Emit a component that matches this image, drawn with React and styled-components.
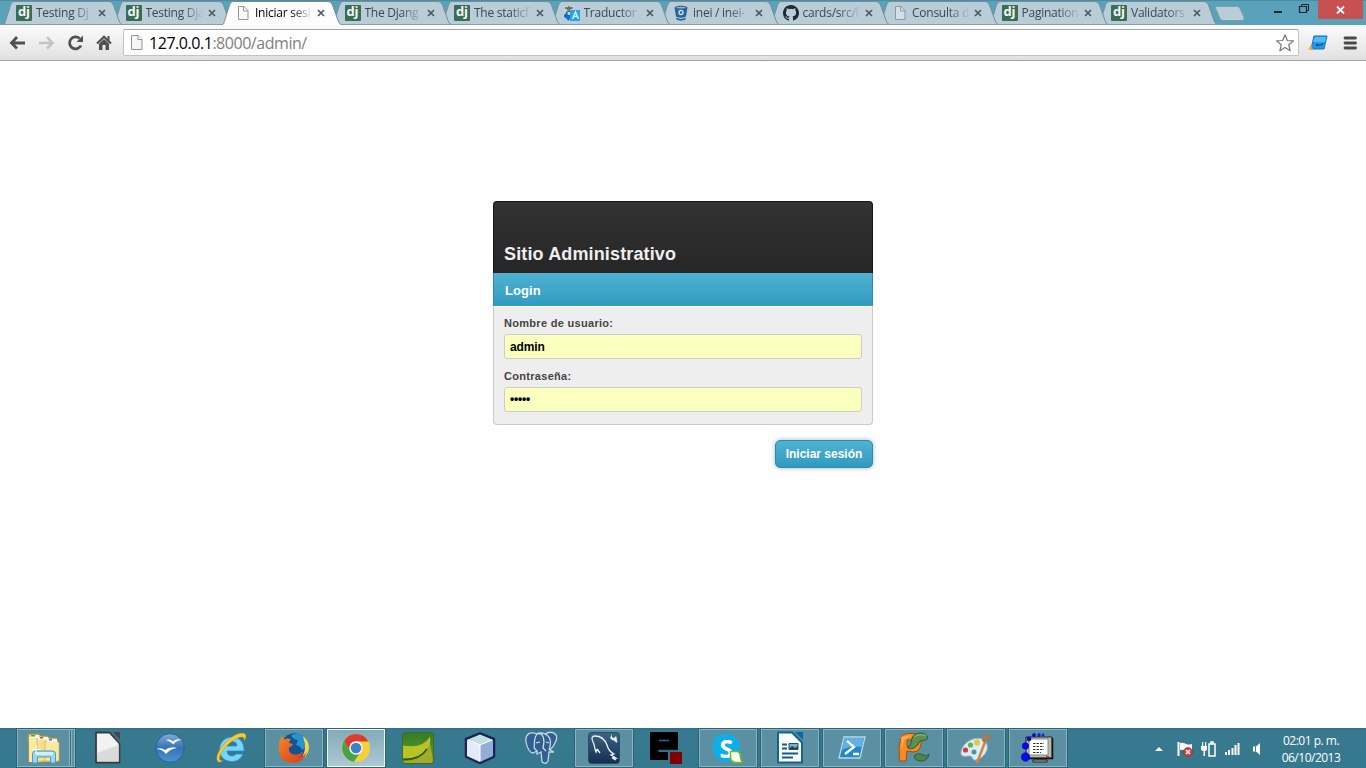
import React from 'react';
import styled, { createGlobalStyle } from 'styled-components';

const GlobalStyle = createGlobalStyle`
  * { box-sizing: border-box; }
  html, body { margin: 0; padding: 0; }
  body { background: #fff; overflow: hidden; font-family: "Liberation Sans", Arial, sans-serif; }
  svg { display: block; flex: none; }
`;

const Screen = styled.div`
  width: 1366px;
  height: 768px;
  display: flex;
  flex-direction: column;
  overflow: hidden;
  background: #fff;
`;

/* ---------- Browser tab strip ---------- */

const TabStrip = styled.div`
  height: 25px;
  flex: none;
  display: flex;
  align-items: flex-start;
  padding-left: 3px;
  background: #59a2ba;
  box-shadow: inset 0 1px #4b8da4;
`;

const Tabs = styled.div`
  display: flex;
  position: relative;
  padding-top: 1px;
`;

const TabBox = styled.div`
  position: relative;
  z-index: ${(p) => p.$z};
  flex: none;
  width: 119.5px;
  height: 24px;
  margin-right: -10px;
  display: flex;
  align-items: center;
  padding-left: 13px;
`;

const TabShape = styled.svg`
  position: absolute;
  left: -3px;
  top: 0;
`;

const Favicon = styled.span`
  position: relative;
  width: 16px;
  height: 16px;
  flex: none;
`;

const TabTitle = styled.span`
  position: relative;
  flex: none;
  margin-left: 4px;
  width: 58px;
  white-space: nowrap;
  font: 12px/16px "Open Sans", "Noto Sans", sans-serif;
  letter-spacing: -0.25px;
  color: ${(p) => (p.$active ? '#000' : '#3d474c')};
  mask-image: linear-gradient(90deg, #000 36px, transparent 58px);
`;

const TabClose = styled.svg`
  position: relative;
  margin-left: 4px;
`;

const NewTab = styled.svg`
  margin: 5px 0 0 6px;
`;

const WindowControls = styled.div`
  margin-left: auto;
  display: flex;
  height: 19px;
`;

const CloseWindow = styled.div`
  width: 45px;
  height: 19px;
  margin: 0 3px 0 7px;
  background: #c75050;
  display: flex;
  align-items: center;
  justify-content: center;
`;

/* ---------- Browser toolbar ---------- */

const Toolbar = styled.div`
  height: 36px;
  flex: none;
  display: flex;
  align-items: center;
  background: linear-gradient(#fbfbfb, #e1e1e1);
  border-bottom: 1px solid #a3a3a3;
`;

const NavIcons = styled.div`
  display: flex;
  width: 123px;
  padding-left: 8px;
  gap: 10px;
`;

const Omnibox = styled.div`
  width: 1176px;
  height: 27px;
  display: flex;
  align-items: center;
  padding: 0 4px 0 7px;
  background: #fff;
  border: 1px solid #c3c3c3;
  border-top-color: #a5a5a5;
  border-radius: 2px;
`;

const Url = styled.div`
  flex: 1;
  margin-left: 6px;
  font: 16px/24px "Open Sans", "Noto Sans", sans-serif;
  letter-spacing: -0.46px;
  color: #000;
`;

const UrlRest = styled.span`
  color: #808080;
`;

const ToolbarEnd = styled.div`
  display: flex;
  align-items: center;
  gap: 15px;
  padding-left: 9px;
`;

/* ---------- Page ---------- */

const Page = styled.main`
  flex: 1;
  display: flex;
  flex-direction: column;
  align-items: center;
  padding-top: 140px;
`;

const LoginForm = styled.div`
  width: 380px;
  display: flex;
  flex-direction: column;
`;

const SiteHeader = styled.h1`
  margin: 0;
  height: 72px;
  padding: 42px 10px 0;
  border: 1px solid #161616;
  border-bottom: 0;
  border-radius: 4px 4px 0 0;
  background: linear-gradient(#333, #262626);
  color: #eee;
  font-size: 18px;
  line-height: 20px;
  font-weight: bold;
  letter-spacing: 0.14px;
`;

const Band = styled.h2`
  margin: 0;
  height: 33px;
  padding: 0 11px;
  border: solid #2b8ab0;
  border-width: 0 1px;
  background: linear-gradient(#4fb2d3, #309bbf);
  color: #fff;
  font-size: 13px;
  line-height: 35px;
  font-weight: bold;
  letter-spacing: 0.05px;
`;

const Fields = styled.div`
  height: 119px;
  padding: 9px 10px 0;
  border: 1px solid #ccc;
  border-top-color: #fff;
  border-radius: 0 0 4px 4px;
  background: #eee;
`;

const Label = styled.label`
  display: block;
  height: 18px;
  font-size: 11px;
  line-height: 14px;
  font-weight: bold;
  letter-spacing: 0.3px;
  color: #444;
`;

const Field = styled.input`
  display: block;
  width: 358px;
  height: 25px;
  margin-bottom: 10px;
  padding: ${(p) => (p.type === 'password' ? '0 5px 2px' : '0 5px')};
  border: 1px solid #ccc;
  border-radius: 3px;
  background: #faffbd;
  color: #000;
  outline: none;
  font: bold 12px "Liberation Sans", Arial, sans-serif;
  letter-spacing: ${(p) => (p.type === 'password' ? '-0.2px' : '-0.1px')};
`;

const Submit = styled.button`
  align-self: flex-end;
  width: 98px;
  height: 28px;
  margin-top: 15px;
  padding: 0;
  border: 1px solid #2b8ab0;
  border-radius: 5px;
  background: linear-gradient(#4fb2d3, #309bbf);
  box-shadow: 0 0 5px rgba(0, 0, 0, 0.3);
  color: #fff;
  font: bold 12px "Liberation Sans", Arial, sans-serif;
`;

/* ---------- Taskbar ---------- */

const Taskbar = styled.footer`
  height: 40px;
  flex: none;
  display: flex;
  align-items: stretch;
  padding-left: 17px;
  background: linear-gradient(#2f6d83, #38798f 2px, #35798f);
`;

const TaskList = styled.div`
  display: flex;
  gap: 4px;
`;

const taskBackground = { open: '#5a90a2', focused: 'linear-gradient(#83abb9, #adc8d2)', idle: 'transparent' };
const taskBorder = { open: '#8cb3c0', focused: '#f2fafc', idle: 'transparent' };

const TaskButton = styled.div`
  position: relative;
  width: 58px;
  height: 38px;
  margin-top: 1px;
  display: flex;
  align-items: center;
  justify-content: center;
  background: ${(p) => taskBackground[p.$state]};
  border: 1px solid ${(p) => taskBorder[p.$state]};
  box-shadow: ${(p) => (p.$state === 'idle' ? 'none' : '0 0 0 1px #296377')};
  ${(p) => p.$stacked && 'padding-right: 5px;'}
`;

const StackEdge = styled.span`
  position: absolute;
  right: 2px;
  top: 0;
  bottom: 0;
  width: 3px;
  background: #2f6c80;
  border-left: 1px solid #8cb3c0;
  border-right: 1px solid #8cb3c0;
`;

const Tray = styled.div`
  margin-left: auto;
  display: flex;
  align-items: center;
  padding-top: 2px;
`;

const TrayIcon = styled.svg`
  margin-right: ${(p) => p.$gap}px;
`;

const Clock = styled.div`
  width: 66px;
  margin: 0 22px 0 17px;
  color: #fff;
  text-align: center;
  white-space: nowrap;
  font: 12px/17px "Open Sans", "Noto Sans", sans-serif;
  letter-spacing: -0.5px;
`;

/* ---------- Favicons ---------- */

const DjangoMark = styled.span`
  display: block;
  width: 16px;
  height: 16px;
  border-radius: 1px;
  background: #3a6d55;
  color: #f4f8f6;
  text-align: center;
  font: bold 13px/13px "Open Sans", sans-serif;
`;

const PageIcon = ({ tint = '#fafafa' }) => (
  <svg width="16" height="16" viewBox="0 0 16 16">
    <path d="M3.500 1.500h5.500l4 4v9H3.500z" fill={tint} stroke="#969696" />
    <path d="M8.500 1.500v4.500h4.500" fill="none" stroke="#969696" />
  </svg>
);

const TranslateIcon = () => (
  <svg width="16" height="16" viewBox="0 0 16 16">
    <path d="M0 1h10v9H0z" fill="#c9d3d4" />
    <path d="M1 3h8M5 1v2M2 8l5-5M3 4l5 4" stroke="#566761" strokeWidth="1.3" fill="none" />
    <path d="M0 10l3-3 1 3h3v3l-3 3-1-2-3-2z" fill="#0870ce" />
    <path d="M6 5h10v11H6z" fill="#2ba1e6" />
    <path d="M8.500 14l3-7 3 7M9.500 11.500h4" stroke="#c7efff" strokeWidth="1.5" fill="none" />
  </svg>
);

const BitbucketIcon = () => (
  <svg width="16" height="16" viewBox="0 0 16 16">
    <path d="M1.500 2.500C3 .2 13 .2 14.500 2.500L13 11.500q-5 2.500-10 0z" fill="#29619a" />
    <ellipse cx="8" cy="2.600" rx="4.800" ry=".9" fill="#8db3cf" />
    <circle cx="8" cy="7.500" r="2" fill="#29619a" stroke="#d5e5ef" strokeWidth="1.300" />
    <path d="M3 12.800q5 2.300 10 0l-.5 1.800q-4.500 2.200-9 0z" fill="#29619a" />
  </svg>
);

const GithubIcon = () => (
  <svg width="16" height="16" viewBox="0 0 16 16">
    <path fill="#20292e" d="M8 0C3.580 0 0 3.580 0 8c0 3.540 2.290 6.530 5.470 7.590.4.070.55-.17.55-.38v-1.490C3.800 14.210 3.330 12.780 3.330 12.780c-.36-.92-.88-1.170-.88-1.170-.73-.5.050-.49.050-.49.810.060 1.230.83 1.230.83.710 1.230 1.870.87 2.330.67.070-.52.280-.87.500-1.070-1.770-.2-3.640-.89-3.640-3.950 0-.87.310-1.590.82-2.150-.080-.2-.36-1.020.080-2.120 0 0 .67-.21 2.200.82a7.500 7.500 0 0 1 4 0c1.530-1.040 2.200-.82 2.200-.82.440 1.100.160 1.920.080 2.120.51.560.82 1.270.82 2.150 0 3.070-1.870 3.750-3.650 3.950.29.250.54.730.54 1.480v2.190c0 .21.150.46.550.38A8 8 0 0 0 8 0" />
  </svg>
);

const favicons = {
  dj: <DjangoMark>dj</DjangoMark>,
  page: <PageIcon />,
  dimPage: <PageIcon tint="#d3dfe5" />,
  translate: <TranslateIcon />,
  bitbucket: <BitbucketIcon />,
  github: <GithubIcon />,
};

const tabs = [
  { title: 'Testing Dj', icon: 'dj' },
  { title: 'Testing Dja', icon: 'dj' },
  { title: 'Iniciar sesi', icon: 'page', active: true },
  { title: 'The Djang', icon: 'dj' },
  { title: 'The staticf', icon: 'dj' },
  { title: 'Traductor', icon: 'translate' },
  { title: 'inei / inei-', icon: 'bitbucket' },
  { title: 'cards/src/l', icon: 'github' },
  { title: 'Consulta d', icon: 'dimPage' },
  { title: 'Pagination', icon: 'dj' },
  { title: 'Validators', icon: 'dj' },
];

const Tab = ({ tab, index }) => (
  <TabBox $z={tab.active ? 30 : 20 - index}>
    <TabShape width="126" height="24" viewBox="0 0 126 24">
      <path
        d="M1.500 24C5 24 5 21.500 6 18.500L10.500 4Q11.500 .5 14 .5H109Q112 .5 113.500 4L119 19.500Q120.500 24 124.500 24"
        fill={tab.active ? '#fdfdfd' : '#b8cdd8'}
        stroke={tab.active ? '#748c96' : '#73909c'}
      />
      {!tab.active && <path d="M2 23.500h122" stroke="#8b9ba1" />}
    </TabShape>
    <Favicon>{favicons[tab.icon]}</Favicon>
    <TabTitle $active={tab.active}>{tab.title}</TabTitle>
    <TabClose width="8" height="8" viewBox="0 0 8 8">
      <path d="M1 1l6 6M7 1l-6 6" stroke="#50585c" strokeWidth="1.700" />
    </TabClose>
  </TabBox>
);

/* ---------- Toolbar icons ---------- */

const BackIcon = ({ color }) => (
  <svg width="19" height="18" viewBox="0 0 19 18">
    <path d="M9 3L3.500 9 9 14.500M4 9h13" fill="none" stroke={color} strokeWidth="2.800" />
  </svg>
);

const ForwardIcon = ({ color }) => (
  <svg width="19" height="18" viewBox="0 0 19 18">
    <path d="M10 3l5.500 6-5.500 5.500M15 9H2" fill="none" stroke={color} strokeWidth="2.500" />
  </svg>
);

const ReloadIcon = () => (
  <svg width="19" height="18" viewBox="0 0 19 18">
    <path d="M15 11.500a6 6 0 1 1-1.300-7" fill="none" stroke="#505050" strokeWidth="2.800" />
    <path d="M17 1.500V8h-6.500z" fill="#505050" />
  </svg>
);

const HomeIcon = () => (
  <svg width="18" height="18" viewBox="0 0 18 18">
    <path d="M2 9.500L9 2.800l7 6.700" fill="none" stroke="#505050" strokeWidth="2.200" />
    <path d="M12.500 2h2v5l-2-2zM4 9.700L9 5l5 4.700V16h-3.500v-5h-3v5H4z" fill="#505050" />
  </svg>
);

/* ---------- Taskbar icons ---------- */

const FoldersIcon = () => (
  <svg width="34" height="32" viewBox="0 0 34 32">
    <path d="M1 3l2-1h9l2 2h6l3 2h7l1 24H2z" fill="#e7c967" stroke="#a88c3b" />
    <path d="M2 5h12v25H2z" fill="#fae9a3" />
    <path d="M10 6h12l2 3v20H10z" fill="#f6df8c" stroke="#d1b65d" strokeWidth=".7" />
    <path d="M18 9h12l2 2v18H18z" fill="#fae7a0" stroke="#d1b65d" strokeWidth=".7" />
    <path d="M3 3h9v3H3zM11 5h10v3H11zM20 7h10v3H20z" fill="#f7f6e7" />
    <path d="M4 3h4v1.500H4z" fill="#29b040" />
    <path d="M13 5h3v1.500h-3z" fill="#d94a3d" />
    <path d="M22 7h3v1.500h-3z" fill="#3a82cf" />
    <path d="M5.500 31V22q0-3 3-3h17q3 0 3 3v9h-5v-6h-13v6z" fill="#9bd8ef" stroke="#4b9dbc" />
    <path d="M9 20h17v3H9z" fill="#d3f0fa" />
    <path d="M9 13v9M4.500 17.500h9" stroke="#fff" />
  </svg>
);

const LibreOfficeIcon = () => (
  <svg width="28" height="34" viewBox="0 0 28 34">
    <path d="M2 1.500h13.500l10 11v19H2z" fill="#f2f2f2" stroke="#3b3b3b" strokeWidth="1.800" strokeLinejoin="round" />
    <path d="M19 1h7v8z" fill="#484848" />
    <path d="M3 22L24.700 14v16.600H3z" fill="#dadada" />
  </svg>
);

const OpenOfficeIcon = () => (
  <svg width="32" height="32" viewBox="0 0 32 32">
    <defs>
      <linearGradient id="oo" x1="0" y1="0" x2="0" y2="1"><stop stopColor="#85acd7" /><stop offset=".5" stopColor="#3273b6" /><stop offset="1" stopColor="#4c96d1" /></linearGradient>
    </defs>
    <circle cx="16" cy="16" r="14.300" fill="url(#oo)" stroke="#28639d" />
    <path d="M12 8q4-1.500 7 1.500 4-3.500 9-1.500-6 0-8.500 4.500-3-3.500-7.500-4.500zM2 17q6-2 9 1 5-4 12-2-7 1-11 6-4-5-10-5z" fill="#fff" />
  </svg>
);

const ExplorerIcon = () => (
  <svg width="34" height="32" viewBox="0 0 34 32">
    <path d="M28 22c-2 5-6 7.500-11 7.500C9 29.500 4.500 24 4.500 17.500 4.500 10 10 5 17 5c8 0 12.500 6 12 14H12c0 3 2 5 5 5 2 0 3-.7 4-2zM12 14h10c0-3-2-4.500-5-4.500s-5 1.500-5 4.500z" fill="#75d6f9" stroke="#2a90c9" strokeWidth=".8" />
    <path d="M2.500 29C-1 24 8 11 17 5 25-.5 31.500 0 31 5c-.7 3-2 4-2 4 1-4-1.500-5-6-3C13 10 5 21 4.500 26c0 2 1 3.500 4 2-2.500 2.500-5 3-6 1z" fill="#f9ca2f" stroke="#a98621" strokeWidth=".4" />
  </svg>
);

const FirefoxIcon = () => (
  <svg width="32" height="32" viewBox="0 0 32 32">
    <defs>
      <linearGradient id="fx" x1="0" y1="0" x2="1" y2="1"><stop stopColor="#f18b2a" /><stop offset=".6" stopColor="#e2561f" /><stop offset="1" stopColor="#d94219" /></linearGradient>
    </defs>
    <circle cx="16.500" cy="14" r="12.800" fill="#155493" />
    <path d="M13 3.500Q19 0 25 4q5 5 4 11l-5 3q-1-4-6-5l2-5q-4 0-7-4.500z" fill="#2795cd" />
    <path d="M25 4q6 5 6 12-1 9-9 12 6-8 5-16z" fill="#f8d44a" />
    <path d="M2 8l2-4.500 2 4q4-2 7 0-2 1-2 3.500l4 1q-1 3-4 3.500-1 6 5 7 5 1 9-3-1 5-5 6 5 0 9-6-3 11-13 11.500Q4 31 1.500 22-.5 14 2 8z" fill="url(#fx)" />
  </svg>
);

const ChromeIcon = () => (
  <svg width="30" height="30" viewBox="0 0 30 30">
    <circle cx="15" cy="15" r="14" fill="#f7cf3a" />
    <path d="M3 8A14 14 0 0 1 27.500 8.500H15a7 7 0 0 0-6.500 9z" fill="#d93d32" />
    <path d="M3 8A14 14 0 0 0 13 28.800L20 18a7 7 0 0 1-11 0z" fill="#45a447" />
    <circle cx="15" cy="15" r="6.700" fill="#f4f7f7" />
    <circle cx="15" cy="15" r="5.300" fill="#3d80c8" />
  </svg>
);

const LeafIcon = () => (
  <svg width="32" height="32" viewBox="0 0 32 32">
    <defs>
      <linearGradient id="lf" x1="0" y1="0" x2="0" y2="1"><stop stopColor="#2f7e22" /><stop offset="1" stopColor="#6c9a33" /></linearGradient>
    </defs>
    <rect x=".5" y=".5" width="31" height="31" rx="2.500" fill="url(#lf)" stroke="#47662a" />
    <path d="M1 13.500Q21 17 28 4.500q1 9-3 14Q18 28 1 26z" fill="#b9c326" />
    <path d="M1 29q20 0 27-18 2 10 3 18l-2 2H3z" fill="#a3ac27" />
    <path d="M1 27.500Q18 28 25 17" stroke="#2d5a20" strokeWidth="1.600" fill="none" />
  </svg>
);

const CubeIcon = () => (
  <svg width="32" height="32" viewBox="0 0 32 32">
    <path d="M16 1.500l14 5.500v17.500l-14 6.500L2 24.500V7z" fill="#a8c5e8" stroke="#1b2553" strokeWidth="2.500" strokeLinejoin="round" />
    <path d="M3 8l13-5.500L29 8l-13 5z" fill="#c5dfe0" />
    <path d="M3 8l13 5v17L3 24z" fill="#e3ebfa" />
    <path d="M16 13l13-5v16l-13 6z" fill="#94add8" />
    <path d="M4 8l12 5 12-5M16 13v16" stroke="#fff" fill="none" />
  </svg>
);

const ElephantIcon = () => (
  <svg width="34" height="34" viewBox="0 0 34 34">
    <path d="M12 3C5 0 0 3 1 11c1 6 4 11 7 11l4-2v3l4-2 1 10q4 3 6-1l1-9h5l-4-2c5-5 8-12 6-15-3-4-8-3-11-1q-5-2-8 0z" fill="#315f92" stroke="#c6d5df" strokeWidth="1.300" />
    <path d="M12 3C8 8 10 15 9 17l3 3M12 3c7-2 8 7 6 14l3 3M20 3c7 3 6 10 4 16M11 12l4-1M21 11l3 1" fill="none" stroke="#d4e0e7" strokeWidth="1.200" />
  </svg>
);

const MysqlIcon = () => (
  <svg width="32" height="32" viewBox="0 0 32 32">
    <defs><linearGradient id="my" x1="0" y1="0" x2="0" y2="1"><stop stopColor="#3d6485" /><stop offset="1" stopColor="#122f51" /></linearGradient></defs>
    <rect x=".5" y=".5" width="31" height="31" rx="3" fill="url(#my)" stroke="#294c6b" />
    <path d="M9 17l-1 3C6 16 7 13 5 10 3 6 4 4 7 4c6 0 10 4 12 9 1 4 3 7 7 9l-3 1 5 3-4 0 4 2M9 17l3 4" fill="none" stroke="#edf6fb" strokeWidth="1.300" />
    <path d="M24 2v3l2 1 2-2 1 3-1 2-4-1-2-2z" fill="#e4eef5" />
    <path d="M26 7l3 3" stroke="#e4eef5" strokeWidth="2" />
  </svg>
);

const PixelEIcon = () => (
  <svg width="32" height="32" viewBox="0 0 32 32">
    <path d="M0 0h28v19H9v1h9v8H0z" />
    <path d="M9 8.500h10M8 18.500h20" stroke="#2d6b80" strokeWidth="1.500" />
    <path d="M20 20h12v12H20z" fill="#800000" />
  </svg>
);

const SkypeMark = styled.span`
  position: relative;
  width: 27px;
  height: 28px;
  margin-right: 3px;
  border-radius: 10px 13px 11px 13px;
  background: #10aee9;
  color: #fff;
  text-align: center;
  font: bold 25px/28px "Open Sans", sans-serif;
`;

const SkypeBadge = styled.svg`
  position: absolute;
  right: -3px;
  bottom: -2px;
`;

const SkypeIcon = () => (
  <SkypeMark>
    S
    <SkypeBadge width="14" height="14" viewBox="0 0 14 14">
      <path d="M1.500 1.500h7q3 1 3 6l1.500 5H6q-4.500-1-4.500-6z" fill="#fbffed" stroke="#76b82a" strokeWidth="1.500" />
    </SkypeBadge>
  </SkypeMark>
);

const WriterIcon = () => (
  <svg width="28" height="34" viewBox="0 0 28 34">
    <path d="M2 1.500h14l10 10v20H2z" fill="#fafcff" stroke="#126491" strokeWidth="2" strokeLinejoin="round" />
    <path d="M19 1h8v8z" fill="#0a67a3" />
    <path d="M6 13.500h5M6 17.500h5M6 22.500h16M6 26.500h11" stroke="#135b89" strokeWidth="2" />
    <path d="M13 12.500h9v6h-9z" fill="#75add5" stroke="#254e65" />
    <path d="M13 18l3-3 3 2 3-2v3z" fill="#293d45" />
  </svg>
);

const PowerShellIcon = () => (
  <svg width="30" height="26" viewBox="0 0 30 26">
    <path d="M7 2h21l-5 21H2z" fill="#2587c8" stroke="#b9d9e7" strokeWidth="1.300" />
    <path d="M7 3h20l-2 9Q13 10 5 15z" fill="#61b0df" />
    <path d="M10 6l7 6-9 7M16 19h6" fill="none" stroke="#fff" strokeWidth="2.300" />
  </svg>
);

const PyCharmIcon = () => (
  <svg width="34" height="32" viewBox="0 0 34 32">
    <path
      d="M2.500 29L2 14 5 3q7-3 14-1 6 3 5 10-1 8-8 8l-6-1-1 10zM10 8v6q6 1 7-3 0-3-3-3z"
      fill="#f58b23" fillRule="evenodd" stroke="#a84b0b" strokeLinejoin="round"
    />
    <path d="M4 5q5-2 11-1.500L7 8 5 18z" fill="#ffab4d" />
    <path d="M30 4q2 3-1 4l-6 1q-2 5-6 7-5 2-7-1 4 0 4-5Q15 2 22 1q5-1 8 3z" fill="#5c8f50" stroke="#285f32" />
    <path d="M17 5q6-4 12-1" fill="none" stroke="#99ba7e" />
    <path d="M17 24q4-4 9-1 4 2 6-1-1 7-8 7-6 0-7-5z" fill="#4d8548" stroke="#285f32" />
  </svg>
);

const PaintIcon = () => (
  <svg width="34" height="32" viewBox="0 0 34 32">
    <path d="M2 20C3 11 15 4 23 7q7 4 5 11-3 8-11 10c-4 1-3-4-6-4S1 26 2 20z" fill="#d5eef7" stroke="#8bb5c7" />
    <circle cx="6.500" cy="18" r="2.600" fill="#df3744" />
    <circle cx="11.500" cy="13" r="2.600" fill="#67b24b" />
    <circle cx="18" cy="10.500" r="3" fill="#edc438" />
    <circle cx="15" cy="20" r="2.500" fill="#548ea4" />
    <path d="M18 31l8-21" stroke="#dc8237" strokeWidth="2.500" />
    <path d="M24 2l3 2 2-4 1 4 3 1-5 4-2 2-3-2z" fill="#a87b54" />
  </svg>
);

const TerminalIcon = () => (
  <svg width="34" height="32" viewBox="0 0 34 32">
    <path d="M5 5h26v21H5zM12 28h14v2H12z" fill="#b8b9af" stroke="#222" />
    <path d="M31.500 6v20.500H8" fill="none" stroke="#111" strokeWidth="1.500" />
    <path d="M8 7h19v16H8z" fill="#fff" stroke="#888" />
    <path d="M12 11.500h11M12 14.500h11M12 17.500h11M12 20.500h8" stroke="#333" strokeDasharray="2.500 1" />
    <path d="M25 24.500h3" stroke="#d22" />
    <g fill="#0909ed" stroke="#04049b" strokeWidth=".7">
      <circle cx="4.500" cy="25" r="4.200" /><circle cx="4.500" cy="14" r="3.200" /><circle cx="8" cy="7" r="2" /><circle cx="13" cy="3" r="1.500" />
    </g>
    <path d="M18 1v4M16 3h4M22 1.500v3M20.500 3h3" stroke="#0909ed" strokeWidth="1.200" />
  </svg>
);

const tasks = [
  { name: 'folders', state: 'open', Icon: FoldersIcon, stacked: true },
  { name: 'libreoffice', state: 'idle', Icon: LibreOfficeIcon },
  { name: 'openoffice', state: 'idle', Icon: OpenOfficeIcon },
  { name: 'explorer', state: 'idle', Icon: ExplorerIcon },
  { name: 'firefox', state: 'open', Icon: FirefoxIcon },
  { name: 'chrome', state: 'focused', Icon: ChromeIcon },
  { name: 'leaf', state: 'idle', Icon: LeafIcon },
  { name: 'cube', state: 'idle', Icon: CubeIcon },
  { name: 'elephant', state: 'idle', Icon: ElephantIcon },
  { name: 'mysql', state: 'open', Icon: MysqlIcon },
  { name: 'pixel-e', state: 'idle', Icon: PixelEIcon },
  { name: 'skype', state: 'open', Icon: SkypeIcon },
  { name: 'writer', state: 'open', Icon: WriterIcon },
  { name: 'powershell', state: 'open', Icon: PowerShellIcon },
  { name: 'pycharm', state: 'open', Icon: PyCharmIcon },
  { name: 'paint', state: 'open', Icon: PaintIcon },
  { name: 'terminal', state: 'open', Icon: TerminalIcon },
];

export default function App() {
  return (
    <Screen>
      <GlobalStyle />
      <TabStrip>
        <Tabs>
          {tabs.map((tab, i) => <Tab key={i} tab={tab} index={i} />)}
        </Tabs>
        <NewTab width="33" height="17" viewBox="0 0 33 17">
          <path d="M2 1.500h21q2 0 3 2l4 9q1 3-2 3H9q-2 0-3-2L1.500 3q-.5-1.500 1-1.500z" fill="#b8cdd8" stroke="#7d9eaa" />
        </NewTab>
        <WindowControls>
          <svg width="40" height="18" viewBox="0 0 40 18">
            <path d="M3 11h8v2H3z" fill="#1e2528" />
            <path d="M28.500 6.500h7v6h-7z" fill="none" stroke="#1e2528" strokeWidth="1.200" />
            <path d="M30.500 6V4.500h7V10.500H35.500" fill="none" stroke="#1e2528" />
          </svg>
          <CloseWindow>
            <svg width="9" height="8" viewBox="0 0 9 8"><path d="M1 .5l7 7M8 .5l-7 7" stroke="#fff" strokeWidth="1.800" /></svg>
          </CloseWindow>
        </WindowControls>
      </TabStrip>

      <Toolbar>
        <NavIcons>
          <BackIcon color="#505050" />
          <ForwardIcon color="#c3c3c3" />
          <ReloadIcon />
          <HomeIcon />
        </NavIcons>
        <Omnibox>
          <svg width="12" height="15" viewBox="0 0 12 15">
            <path d="M.5 .5H7l4 4v10H.5z" fill="#f6f6f6" stroke="#929292" />
            <path d="M7 .5v4h4" fill="#fff" stroke="#929292" />
          </svg>
          <Url>127.0.0.1<UrlRest>:8000/admin/</UrlRest></Url>
          <svg width="18" height="18" viewBox="0 0 18 18">
            <path d="M9 .8l2.300 5.700 6.200.4-4.800 3.900 1.500 6L9 13.500l-5.200 3.300 1.500-6L.5 6.900l6.200-.4z" fill="#fff" stroke="#757575" strokeWidth="1.200" strokeLinejoin="round" />
          </svg>
        </Omnibox>
        <ToolbarEnd>
          <svg width="20" height="18" viewBox="0 0 20 18">
            <path d="M6 2h13l-3 13H3z" fill="#2099e9" stroke="#1570bc" />
            <path d="M7 3h11l-1 5H5z" fill="#52bafa" />
            <path d="M0 16l3-5 2 4z" fill="#f3a82c" />
            <path d="M8 11l2-1m-2 1l2 1m-2-1h6l1-2" stroke="#123e64" fill="none" />
          </svg>
          <svg width="14" height="14" viewBox="0 0 14 14">
            <path d="M2 2h10.500M2 7h10.500M2 12h10.500" stroke="#494949" strokeWidth="2.800" strokeLinecap="round" />
          </svg>
        </ToolbarEnd>
      </Toolbar>

      <Page>
        <LoginForm>
          <SiteHeader>Sitio Administrativo</SiteHeader>
          <Band>Login</Band>
          <Fields>
            <Label>Nombre de usuario:</Label>
            <Field type="text" defaultValue="admin" />
            <Label>Contraseña:</Label>
            <Field type="password" defaultValue="admin" />
          </Fields>
          <Submit>Iniciar sesión</Submit>
        </LoginForm>
      </Page>

      <Taskbar>
        <TaskList>
          {tasks.map(({ name, state, Icon, stacked }) => (
            <TaskButton key={name} $state={state} $stacked={stacked}>
              <Icon />
              {stacked && <StackEdge />}
            </TaskButton>
          ))}
        </TaskList>
        <Tray>
          <TrayIcon $gap={14} width="8" height="6" viewBox="0 0 8 6"><path d="M0 5l4-4 4 4z" fill="#fff" /></TrayIcon>
          <TrayIcon $gap={7} width="17" height="16" viewBox="0 0 17 16">
            <path d="M1.500 1v14" stroke="#fff" strokeWidth="2" />
            <path d="M3 2q3-1 6 1 3 1 6 0v7q-3 1-6 0-3-2-6-1z" fill="#fff" />
            <circle cx="11" cy="11" r="4.500" fill="#d83b3b" stroke="#96282b" strokeWidth=".6" />
            <path d="M9 9l4 4m0-4l-4 4" stroke="#fff" strokeWidth="1.500" />
          </TrayIcon>
          <TrayIcon $gap={9} width="15" height="16" viewBox="0 0 15 16">
            <path d="M8 3h6v12H8zM10 1h2v2h-2z" fill="none" stroke="#fff" strokeWidth="1.500" />
            <path d="M0 5h6v3q0 2-2 2v5H2.500v-5Q0 10 0 8zM1 1h1.200v4H1zM4 1h1.200v4H4z" fill="#fff" />
          </TrayIcon>
          <TrayIcon $gap={13} width="15" height="14" viewBox="0 0 15 14">
            <path d="M1 10v3M4 8v5M7.500 6v7" stroke="#fff" strokeWidth="2" />
            <path d="M10.500 3v10M13.500 1v12" stroke="#fff" strokeWidth="2" />
          </TrayIcon>
          <TrayIcon $gap={0} width="8" height="14" viewBox="0 0 8 14"><path d="M0 4.500h3L7 1v12L3 9.500H0z" fill="#fff" /><path d="M2.500 4.500v5" stroke="#4a7788" /></TrayIcon>
          <Clock>02:01 p. m.<br />06/10/2013</Clock>
        </Tray>
      </Taskbar>
    </Screen>
  );
}
